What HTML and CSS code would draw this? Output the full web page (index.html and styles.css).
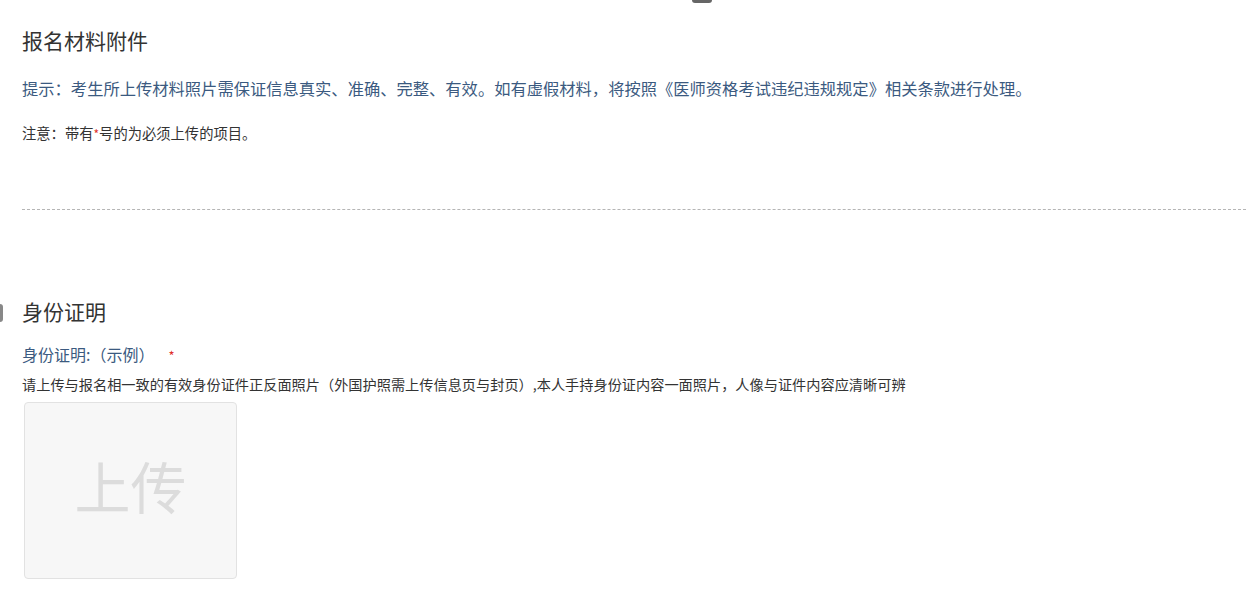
FILE: index.html
```html
<!DOCTYPE html>
<html lang="zh-CN">
<head>
<meta charset="utf-8">
<title>报名材料附件</title>
<link rel="stylesheet" href="styles.css">
</head>
<body>
<div class="edge-top"></div>
<div class="edge-left"></div>
<div class="page">
  <h2 class="title">报名材料附件</h2>
  <p class="tip">提示：考生所上传材料照片需保证信息真实、准确、完整、有效。如有虚假材料，将按照《医师资格考试违纪违规规定》相关条款进行处理。</p>
  <p class="note">注意：带有<span class="req-dot">*</span>号的为必须上传的项目。</p>
  <div class="divider"></div>
  <h2 class="section">身份证明</h2>
  <div class="label">身份证明:（示例）<span class="req">*</span></div>
  <p class="desc">请上传与报名相一致的有效身份证件正反面照片（外国护照需上传信息页与封页）,本人手持身份证内容一面照片，人像与证件内容应清晰可辨</p>
  <div class="upload"><span>上传</span></div>
</div>
</body>
</html>
```
FILE: styles.css
```css
html, body {
  margin: 0;
  padding: 0;
  background: #ffffff;
}
body {
  font-family: "Noto Sans CJK SC", "Noto Sans", sans-serif;
  color: #333333;
  width: 1246px;
  height: 602px;
  overflow: hidden;
  position: relative;
}
.page {
  padding-left: 22px;
}
.title {
  margin: 26px 0 0 0;
  font-size: 21px;
  line-height: 28px;
  font-weight: 400;
  color: #333333;
}
.tip {
  margin: 22px 0 0 0;
  font-size: 16.3px;
  line-height: 24px;
  color: #3b5a80;
  white-space: nowrap;
}
.note {
  margin: 23px 0 0 0;
  font-size: 14.3px;
  line-height: 20px;
  color: #333333;
}
.req-dot {
  color: #e0302a;
  font-size: 12px;
}
.divider {
  margin-top: 65px;
  border-top: 1px dashed #b5b5b5;
}
.section {
  margin: 87px 0 0 0;
  font-size: 21px;
  line-height: 28px;
  font-weight: 400;
  color: #333333;
}
.label {
  margin-top: 17px;
  font-size: 16px;
  line-height: 24px;
  color: #3b5a80;
}
.req {
  color: #e0302a;
  font-size: 13px;
  margin-left: 14px;
}
.desc {
  margin: 6px 0 0 0;
  font-size: 14.2px;
  line-height: 20px;
  color: #333333;
  white-space: nowrap;
}
.upload {
  margin: 8px 0 0 2px;
  width: 211px;
  height: 175px;
  border: 1px solid #e2e2e2;
  border-radius: 4px;
  background: #f7f7f7;
  display: flex;
  align-items: center;
  justify-content: center;
}
.upload span {
  font-size: 56px;
  line-height: 60px;
  color: #dcdcdc;
  margin-top: -12px;
}
.edge-top {
  position: absolute;
  top: 0;
  left: 692px;
  width: 20px;
  height: 3px;
  background: #666;
  border-radius: 0 0 4px 4px;
}
.edge-left {
  position: absolute;
  top: 304px;
  left: 0;
  width: 3px;
  height: 18px;
  background: #888;
  border-radius: 0 3px 3px 0;
}
```
